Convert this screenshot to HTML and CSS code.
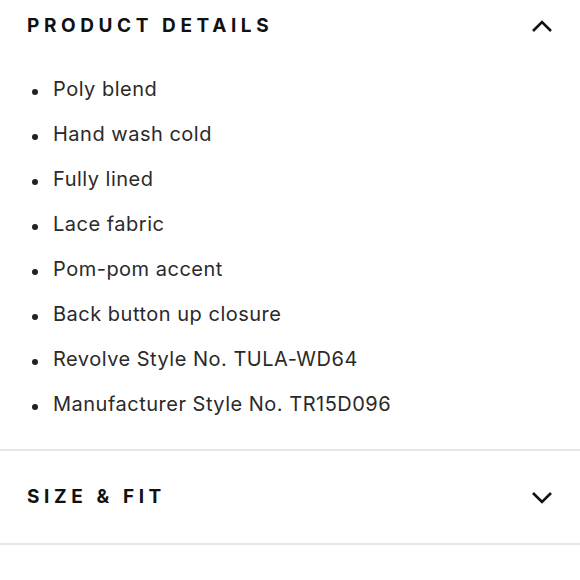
FILE: index.html
```html
<!DOCTYPE html>
<html lang="en">
<head>
<meta charset="utf-8">
<title>Product Details</title>
<link rel="stylesheet" href="styles.css">
</head>
<body>
<section class="panel panel-open">
  <div class="panel-head first">
    <h2 class="panel-title">PRODUCT DETAILS</h2>
    <svg class="chev" width="22" height="14" viewBox="0 0 22 14"><path d="M2 12 L11 3 L20 12" fill="none" stroke="#111" stroke-width="2.6"/></svg>
  </div>
  <ul class="details">
    <li>Poly blend</li>
    <li>Hand wash cold</li>
    <li>Fully lined</li>
    <li>Lace fabric</li>
    <li>Pom-pom accent</li>
    <li>Back button up closure</li>
    <li>Revolve Style No. TULA-WD64</li>
    <li>Manufacturer Style No. TR15D096</li>
  </ul>
</section>
<section class="panel">
  <div class="panel-head">
    <h2 class="panel-title">SIZE &amp; FIT</h2>
    <svg class="chev" width="22" height="14" viewBox="0 0 22 14"><path d="M2 3 L11 12 L20 3" fill="none" stroke="#111" stroke-width="2.6"/></svg>
  </div>
</section>
</body>
</html>
```
FILE: styles.css
```css
html, body {
  margin: 0;
  padding: 0;
  background: #fff;
}
body {
  font-family: Inter, "Liberation Sans", sans-serif;
  color: #222;
  width: 580px;
  overflow: hidden;
}
.panel {
  border-bottom: 2px solid #e6e6e6;
}
.panel-head {
  display: flex;
  align-items: center;
  justify-content: space-between;
  padding: 34px 27px 34px 27px;
}
.panel-head.first {
  padding-top: 14px;
  padding-bottom: 29px;
}
.panel-title {
  margin: 0;
  font-size: 19px;
  line-height: 24px;
  font-weight: 700;
  letter-spacing: 4.6px;
  color: #111;
}
.chev {
  display: block;
}
.details {
  list-style: none;
  margin: 0;
  padding: 0 27px 22px 27px;
}
.details li {
  position: relative;
  font-size: 20px;
  line-height: 45px;
  padding-left: 26px;
  color: #2a2a2a;
  letter-spacing: 0.5px;
}
.details li::before {
  content: "";
  position: absolute;
  left: 5px;
  top: 22px;
  width: 6px;
  height: 6px;
  border-radius: 50%;
  background: #222;
}
```
